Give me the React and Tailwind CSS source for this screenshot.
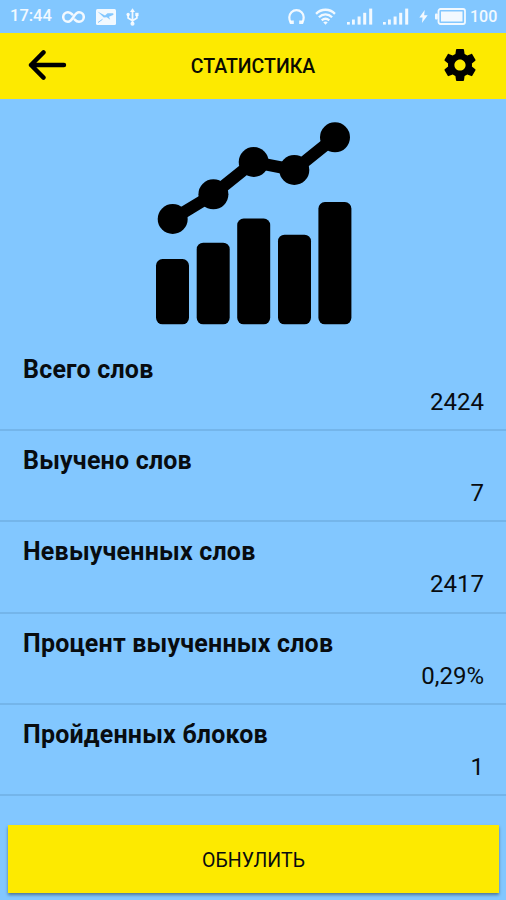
const stats = [
    { label: 'Всего слов', value: '2424' },
    { label: 'Выучено слов', value: '7' },
    { label: 'Невыученных слов', value: '2417' },
    { label: 'Процент выученных слов', value: '0,29%' },
    { label: 'Пройденных блоков', value: '1' },
];

function Signal() {
    return (
        <svg width="26" height="17" viewBox="0 0 26 17" fill="currentColor">
            <rect x="0" y="14" width="2.8" height="2.6" />
            <rect x="5" y="11.5" width="2.8" height="5.1" />
            <rect x="10.6" y="8.5" width="3" height="8.1" />
            <rect x="16.2" y="4.8" width="3" height="11.8" />
            <rect x="22.2" y="0.6" width="3" height="16" />
        </svg>
    );
}

function StatusBar() {
    return (
        <div className="h-[33px] flex items-center justify-between pl-[10px] pr-[9px] text-white/90 text-[16.5px] font-medium">
            <div className="flex items-center">
                <span className="w-[43px]">17:44</span>
                <svg className="ml-[9px]" width="23" height="14" viewBox="0 0 23 14" fill="none" stroke="currentColor" strokeWidth="2.5" strokeLinecap="round">
                    <path d="M10.2 4.4C9 3 7.6 2.2 6 2.2a4.8 4.8 0 0 0 0 9.6c5 0 6-9.6 11-9.6a4.8 4.8 0 0 1 0 9.6c-1.7 0-3-.8-4.2-2.2" />
                </svg>
                <svg className="ml-[11px]" width="20" height="16" viewBox="0 0 20 16">
                    <rect width="20" height="16" rx="1.5" fill="currentColor" />
                    <path d="M1.5 2.5 9 6.6l2.5-2.4h5.3c.8 0 1 1.2.3 1.8L13 7.8l1.2 3-3.4-2.5-3 .2z" fill="#82c7ff" />
                    <path d="m2 13.5 4.5-3.2" stroke="#82c7ff" strokeWidth="1" />
                </svg>
                <svg className="ml-[10px]" width="13" height="18" viewBox="0 0 14 19" fill="none" stroke="currentColor" strokeWidth="1.9">
                    <path d="M7 3v13M2.3 7v3.5L7 13.5l4.7-3V7" />
                    <path d="M4.3 4.2 7 0l2.7 4.2z" fill="currentColor" stroke="none" />
                    <circle cx="7" cy="16.7" r="2.2" fill="currentColor" stroke="none" />
                    <circle cx="2.3" cy="6.8" r="1.8" fill="currentColor" stroke="none" />
                    <path d="M10 5h3.5v3.5H10z" fill="currentColor" stroke="none" />
                </svg>
            </div>
            <div className="flex items-center">
                <svg width="17" height="16" viewBox="0 0 17 16" fill="none" stroke="currentColor">
                    <path d="M2.6 13.5C1.7 12 1.3 10 1.3 8.3a7.2 7.2 0 0 1 14.4 0c0 1.7-.4 3.7-1.3 5.2" strokeWidth="2.2" />
                    <path d="M1.8 13.2h4M11.2 13.2h4" strokeWidth="3.6" />
                </svg>
                <svg className="ml-[10px]" width="21" height="17" viewBox="0 0 22 18" fill="none" stroke="currentColor" strokeWidth="2.4">
                    <path d="M1 6.2C6.5.4 15.5.4 21 6.2M4 9.8c4-4 10-4 14 0M7 13.2c2.5-2.2 5.5-2.2 8 0" />
                    <path d="M8.6 15.2c1.5-1.2 3.3-1.2 4.8 0L11 17.8z" fill="currentColor" stroke="none" />
                </svg>
                <div className="ml-[11px]"><Signal /></div>
                <div className="ml-[10px]"><Signal /></div>
                <svg className="ml-[10px]" width="9" height="13" viewBox="0 0 9 14" fill="currentColor">
                    <path d="M5.8 0 0 8h3.5L2.8 14 9 5.6H5.2z" />
                </svg>
                <svg className="ml-[7px]" width="31" height="17" viewBox="0 0 31 17">
                    <rect x="3.5" y="1" width="26.5" height="15" rx="2" fill="none" stroke="currentColor" strokeWidth="1.8" />
                    <rect x="6" y="3.5" width="21.5" height="10" fill="currentColor" />
                    <rect x="0" y="5.5" width="2.7" height="6" rx="1" fill="currentColor" />
                </svg>
                <span className="ml-[4px] w-[27px] text-[16px]">100</span>
            </div>
        </div>
    );
}

function Header() {
    return (
        <header className="h-[66px] bg-[#fdea00] flex items-center justify-between pl-[28px] pr-[30px]">
            <svg className="-mt-[2px]" width="39" height="30" viewBox="0 0 39 30" fill="none" stroke="#000" strokeWidth="4.4" strokeLinecap="round" strokeLinejoin="round">
                <path d="M36 15H3M15.5 2.4 3 15l12.5 12.6" />
            </svg>
            <h1 className="mt-[2px] mr-[5px] text-[19.5px] leading-6 font-medium text-[#0b0b00]">СТАТИСТИКА</h1>
            <svg className="-mt-[2px]" width="32" height="32" viewBox="2 2 20 20" fill="#000">
                <path d="M19.43 12.98c.04-.32.07-.64.07-.98s-.03-.66-.07-.98l2.11-1.65c.19-.15.24-.42.12-.64l-2-3.46c-.12-.22-.39-.3-.61-.22l-2.49 1c-.52-.4-1.08-.73-1.69-.98l-.38-2.65C14.46 2.18 14.25 2 14 2h-4c-.25 0-.46.18-.49.42l-.38 2.65c-.61.25-1.17.59-1.69.98l-2.49-1c-.23-.09-.49 0-.61.22l-2 3.46c-.13.22-.07.49.12.64l2.11 1.65c-.04.32-.07.65-.07.98s.03.66.07.98l-2.11 1.65c-.19.15-.24.42-.12.64l2 3.46c.12.22.39.3.61.22l2.49-1c.52.4 1.08.73 1.69.98l.38 2.65c.03.24.24.42.49.42h4c.25 0 .46-.18.49-.42l.38-2.65c.61-.25 1.17-.59 1.69-.98l2.49 1c.23.09.49 0 .61-.22l2-3.46c.12-.22.07-.49-.12-.64l-2.11-1.65zM12 15.5c-1.93 0-3.5-1.57-3.5-3.5s1.57-3.5 3.5-3.5 3.5 1.57 3.5 3.5-1.57 3.5-3.5 3.5z" />
            </svg>
        </header>
    );
}

function ChartIcon() {
    return (
        <svg width="220" height="225" viewBox="0 0 220 225">
            <path d="M29.7 109 70.4 84.3 110.7 52l40.6 8L192 27.3" fill="none" stroke="#000" strokeWidth="12" />
            <circle cx="29.7" cy="109" r="15" />
            <circle cx="70.4" cy="84.3" r="15" />
            <circle cx="110.7" cy="52" r="15" />
            <circle cx="151.3" cy="60" r="15" />
            <circle cx="192" cy="27.3" r="15" />
            <rect x="13" y="149" width="33" height="65.3" rx="6.5" />
            <rect x="53.7" y="132.7" width="33" height="81.6" rx="6.5" />
            <rect x="94.2" y="108.5" width="33" height="105.8" rx="6.5" />
            <rect x="135" y="124.7" width="33" height="89.6" rx="6.5" />
            <rect x="175.4" y="92" width="33" height="122.3" rx="6.5" />
        </svg>
    );
}

export default function App() {
    return (
        <div className="w-full h-[900px] overflow-hidden bg-[#82c7ff] flex flex-col font-['Roboto',sans-serif] text-[#080c10]">
            <StatusBar />
            <Header />
            <div className="h-[240.5px] pt-[11px] flex justify-center">
                <ChartIcon />
            </div>
            <ul>
                {stats.map((item) => (
                    <li key={item.label} className="h-[91.4px] border-b-2 border-[#74b5ea] pl-[23px] pr-[22px] pt-[14px]">
                        <p className="text-[25px] leading-8 font-bold tracking-[0.2px]">{item.label}</p>
                        <p className="text-[24px] leading-8 text-right">{item.value}</p>
                    </li>
                ))}
            </ul>
            <button className="mt-[28.5px] ml-[8px] mr-[7px] h-[68px] pt-[3px] bg-[#fdea00] shadow-[0_2px_3px_rgba(0,0,0,0.4)] text-[19.5px]">
                ОБНУЛИТЬ
            </button>
        </div>
    );
}
